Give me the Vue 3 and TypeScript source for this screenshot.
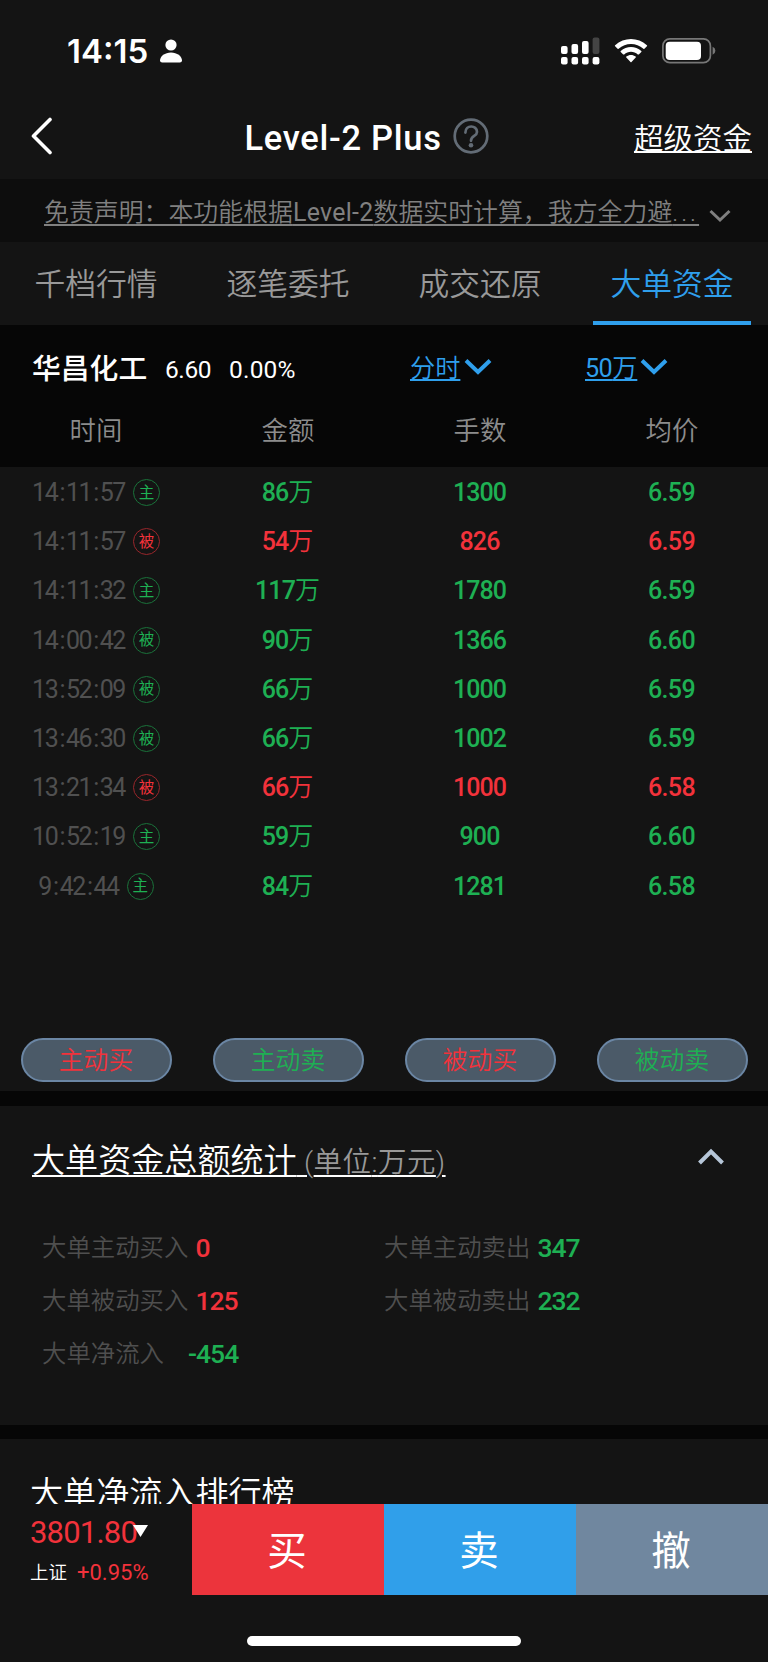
<script setup lang="ts">
type Tone = 'up' | 'down'

interface Trade {
  time: string
  kind: '主' | '被'
  amount: number
  lots: number
  price: string
  tone: Tone
}

interface Stat {
  label: string
  value: string
  tone: Tone
}

const tabs: string[] = ['千档行情', '逐笔委托', '成交还原', '大单资金']
const activeTab = 3
const columns: string[] = ['时间', '金额', '手数', '均价']

const trades: Trade[] = [
  { time: '14:11:57', kind: '主', amount: 86, lots: 1300, price: '6.59', tone: 'down' },
  { time: '14:11:57', kind: '被', amount: 54, lots: 826, price: '6.59', tone: 'up' },
  { time: '14:11:32', kind: '主', amount: 117, lots: 1780, price: '6.59', tone: 'down' },
  { time: '14:00:42', kind: '被', amount: 90, lots: 1366, price: '6.60', tone: 'down' },
  { time: '13:52:09', kind: '被', amount: 66, lots: 1000, price: '6.59', tone: 'down' },
  { time: '13:46:30', kind: '被', amount: 66, lots: 1002, price: '6.59', tone: 'down' },
  { time: '13:21:34', kind: '被', amount: 66, lots: 1000, price: '6.58', tone: 'up' },
  { time: '10:52:19', kind: '主', amount: 59, lots: 900, price: '6.60', tone: 'down' },
  { time: '9:42:44', kind: '主', amount: 84, lots: 1281, price: '6.58', tone: 'down' },
]

const filters: { label: string; tone: Tone }[] = [
  { label: '主动买', tone: 'up' },
  { label: '主动卖', tone: 'down' },
  { label: '被动买', tone: 'up' },
  { label: '被动卖', tone: 'down' },
]

const stats: Stat[] = [
  { label: '大单主动买入', value: '0', tone: 'up' },
  { label: '大单主动卖出', value: '347', tone: 'down' },
  { label: '大单被动买入', value: '125', tone: 'up' },
  { label: '大单被动卖出', value: '232', tone: 'down' },
  { label: '大单净流入', value: '-454', tone: 'down' },
]
</script>

<template>
  <div class="screen">
    <div class="status">
      <span class="clock">14:15</span>
      <svg class="person" width="24" height="24" viewBox="0 0 24 24">
        <circle cx="12" cy="6" r="5.6" />
        <path d="M1 21.5C1 17 6 13.4 12 13.4S23 17 23 21.5Q23 23.6 20.8 23.6H3.2Q1 23.6 1 21.5Z" />
      </svg>
      <svg class="signal" width="39" height="28" viewBox="0 0 39 28">
        <rect x="0" y="9" width="6.6" height="8" rx="2" />
        <rect x="10.5" y="7" width="6.6" height="10" rx="2" />
        <rect x="21" y="4" width="6.6" height="13" rx="2" />
        <rect class="dim" x="31.6" y="0.5" width="6.8" height="16.5" rx="2" />
        <rect x="0" y="20" width="6.6" height="7.6" rx="2" />
        <rect x="10.5" y="20" width="6.6" height="7.6" rx="2" />
        <rect x="21" y="20" width="6.6" height="7.6" rx="2" />
        <rect x="31.6" y="20" width="6.8" height="7.6" rx="2" />
      </svg>
      <svg class="wifi" width="34" height="26" viewBox="0 0 34 26">
        <path d="M1.1 7.3C10 -1.1 24 -1.1 32.9 7.3Q33.4 7.8 32.9 8.3L30.4 10.7Q29.9 11.1 29.4 10.7C22.4 4.3 11.6 4.3 4.6 10.7Q4.1 11.1 3.6 10.7L1.1 8.3Q.6 7.8 1.1 7.3Z" />
        <path d="M6.7 13C12.5 7.7 21.5 7.7 27.3 13Q27.8 13.5 27.3 14L24.8 16.4Q24.3 16.8 23.8 16.4C20 13 14 13 10.2 16.4Q9.7 16.8 9.2 16.4L6.7 14Q6.2 13.5 6.7 13Z" />
        <path d="M12.3 18.6C15 16.5 19 16.5 21.7 18.6Q22.2 19.1 21.7 19.6L17.5 24Q17 24.4 16.5 24L12.3 19.6Q11.8 19.1 12.3 18.6Z" />
      </svg>
      <svg class="battery" width="54" height="26" viewBox="0 0 54 26">
        <rect x="0.9" y="0.9" width="47.5" height="23.8" rx="7" fill="none" stroke="#777" stroke-width="1.7" />
        <rect x="3.7" y="3.7" width="35.3" height="18.2" rx="4" />
        <path d="M50.6 8.8V16.8Q53.4 15.6 53.4 12.8T50.6 8.8Z" fill="#777" />
      </svg>
    </div>

    <header class="nav">
      <svg class="back" width="24" height="38" viewBox="0 0 24 38">
        <path d="M20 2.5L3.5 19L20 35.5" />
      </svg>
      <div class="title">
        <h1>Level-2 Plus</h1>
        <svg class="help" width="36" height="36" viewBox="0 0 36 36">
          <circle cx="18" cy="18" r="16.3" />
          <path d="M12.4 14.6C12.4 6.4 24 6.8 24 13.9C24 18.2 18 17.8 18 22.8" />
          <circle class="dot" cx="18" cy="27.2" r="2.3" />
        </svg>
      </div>
      <a class="nav-link">超级资金</a>
    </header>

    <div class="notice">
      <span class="notice-text">免责声明：本功能根据<span class="latin">Level-2</span>数据实时计算，我方全力避<span class="dots">...</span></span>
      <svg width="22" height="14" viewBox="0 0 22 14"><path d="M1.5 2L11 11L20.5 2" /></svg>
    </div>

    <nav class="tabs">
      <div v-for="(tab, i) in tabs" :key="tab" class="tab" :class="{ active: i === activeTab }">
        <span>{{ tab }}</span>
      </div>
    </nav>

    <section class="quote">
      <div class="quote-bar">
        <strong>华昌化工</strong>
        <span class="last">6.60</span>
        <span class="change">0.00%</span>
        <div class="picker period">
          <span>分时</span>
          <svg width="28" height="18" viewBox="0 0 28 18"><path d="M2 2.5L14 14L26 2.5" /></svg>
        </div>
        <div class="picker size">
          <span><i>50</i>万</span>
          <svg width="28" height="18" viewBox="0 0 28 18"><path d="M2 2.5L14 14L26 2.5" /></svg>
        </div>
      </div>
      <div class="head">
        <span v-for="c in columns" :key="c">{{ c }}</span>
      </div>
    </section>

    <section class="trades">
      <div class="rows">
        <div v-for="(t, i) in trades" :key="i" class="row" :class="t.tone">
          <div class="when">
            <span class="time"><template v-for="(part, p) in t.time.split(':')" :key="p"><b v-if="p > 0">:</b>{{ part }}</template></span>
            <span class="badge"><em>{{ t.kind }}</em></span>
          </div>
          <div class="num">{{ t.amount }}<span class="wan">万</span></div>
          <div class="num">{{ t.lots }}</div>
          <div class="num price">{{ t.price }}</div>
        </div>
      </div>
      <div class="filters">
        <div v-for="f in filters" :key="f.label" class="filter-cell">
          <button class="filter" :class="f.tone">{{ f.label }}</button>
        </div>
      </div>
    </section>

    <section class="summary">
      <div class="summary-head">
        <h2>大单资金总额统计<small><span class="paren">&nbsp;(</span>单位<span class="paren">:</span>万元<span class="paren">)</span></small></h2>
        <svg width="28" height="18" viewBox="0 0 28 18"><path d="M2.5 15L14 3.5L25.5 15" /></svg>
      </div>
      <div class="stats">
        <div v-for="s in stats" :key="s.label" class="stat">
          <span class="stat-label">{{ s.label }}</span>
          <span class="stat-value" :class="s.tone">{{ s.value }}</span>
        </div>
      </div>
    </section>

    <section class="ranking">
      <h2>大单净流入排行榜</h2>
    </section>

    <footer class="footer">
      <div class="trade-bar">
        <div class="index">
          <div class="index-top">
            <span class="index-value">3801.80</span>
            <svg width="15" height="12" viewBox="0 0 15 12"><path d="M0 0H15L7.5 12Z" /></svg>
          </div>
          <div class="index-bottom"><span>上证</span><span class="pct">+0.95%</span></div>
        </div>
        <button class="buy">买</button>
        <button class="sell">卖</button>
        <button class="cancel">撤</button>
      </div>
      <div class="home"></div>
    </footer>
  </div>
</template>

<style>
body {
  margin: 0;
  background: #fff;
}
</style>

<style scoped>
.screen {
  width: 768px;
  height: 1662px;
  overflow: hidden;
  display: flex;
  flex-direction: column;
  background: #141414;
  color: #fff;
  font-family: Roboto, 'Noto Sans CJK SC', sans-serif;
  font-weight: 350;
}

.screen > * {
  flex: none;
}

svg {
  display: block;
  flex: none;
  fill: #fff;
}

h1,
h2 {
  margin: 0;
}

button {
  border: 0;
  padding: 0;
  font-family: inherit;
}

.up {
  color: #f2323b;
}

.down {
  color: #1eb053;
}

/* status bar */
.status {
  height: 96px;
  box-sizing: border-box;
  padding: 6px 52px 0 67px;
  display: flex;
  align-items: center;
}

.clock {
  font: 600 33px/40px Inter, sans-serif;
  width: 86px;
  white-space: nowrap;
}

.person {
  margin: -1px auto 0 6px;
}

.signal {
  margin-right: 14px;
}

.signal .dim {
  fill: #444;
}

.wifi {
  margin-right: 14px;
}

/* title bar */
.nav {
  height: 83px;
  display: flex;
  align-items: center;
  justify-content: space-between;
  padding: 0 16px 0 30px;
  box-sizing: border-box;
}

.nav > * {
  margin-top: -3px;
}

.back {
  margin-top: -1px;
  margin-bottom: 3px;
  fill: none;
  stroke: #fff;
  stroke-width: 3.6;
  stroke-linecap: round;
  stroke-linejoin: round;
}

.title {
  display: flex;
  align-items: center;
  gap: 11px;
  margin-left: 46px;
}

.title h1 {
  font-size: 34.5px;
  line-height: 44px;
  font-weight: 480;
  width: 198px;
  letter-spacing: 0.7px;
  white-space: nowrap;
  padding-top: 3px;
}

.help {
  fill: none;
  stroke: #636c76;
  stroke-width: 2.7;
  stroke-linecap: round;
}

.help .dot {
  fill: #636c76;
  stroke: none;
}

.nav-link {
  font-size: 29.5px;
  line-height: 40px;
  padding-top: 6px;
  text-decoration: underline;
  text-decoration-thickness: 2px;
  text-underline-offset: 2px;
}

/* disclaimer */
.notice {
  height: 63px;
  box-sizing: border-box;
  padding: 4px 37px 0 44px;
  display: flex;
  align-items: center;
  justify-content: space-between;
  background: #0d0d0d;
}

.notice-text {
  font-size: 24.9px;
  line-height: 36px;
  color: #808080;
  white-space: nowrap;
  text-decoration: underline;
  text-decoration-thickness: 2px;
  text-underline-offset: 3px;
}

.notice-text .latin {
  font-weight: 450;
  letter-spacing: 0.3px;
}

.notice-text .dots {
  letter-spacing: 3px;
}

.notice svg {
  margin-top: 7px;
  fill: none;
  stroke: #808080;
  stroke-width: 3;
}

/* tabs */
.tabs {
  height: 83px;
  display: flex;
}

.tab {
  width: 192px;
  display: flex;
  justify-content: center;
  color: #999;
}

.tab span {
  box-sizing: border-box;
  height: 83px;
  width: 158px;
  text-align: center;
  white-space: nowrap;
  font-size: 30.8px;
  line-height: 85px;
  border-bottom: 4px solid transparent;
}

.tab.active span {
  color: #2f9fec;
  border-color: #2f9fec;
}

/* quote strip */
.quote {
  height: 142px;
  background: #060606;
}

.quote-bar {
  height: 88px;
  display: flex;
  align-items: center;
  padding-left: 32px;
  line-height: 36px;
}

.quote-bar strong {
  width: 133px;
  font-size: 28.8px;
  line-height: 38px;
  font-weight: 500;
}

.last,
.change {
  font-size: 24.5px;
  font-weight: 450;
  width: 64px;
  padding-top: 2px;
  letter-spacing: -0.4px;
}

.change {
  width: 181px;
  letter-spacing: 0.2px;
}

.picker {
  display: flex;
  align-items: center;
  gap: 4px;
  font-size: 25.2px;
  color: #2f9fec;
}

.period {
  width: 175px;
}

.size {
  gap: 3px;
}

.picker span {
  text-decoration: underline;
  text-decoration-thickness: 2px;
  text-underline-offset: 2px;
}

.picker i {
  font-style: normal;
  font-weight: 450;
  letter-spacing: -0.6px;
}

.picker svg {
  margin-top: -5px;
  fill: none;
  stroke: #2f9fec;
  stroke-width: 4;
}

.head {
  display: flex;
  font-size: 26.4px;
  line-height: 36px;
  color: #8c8c8c;
}

.head span {
  width: 192px;
  text-align: center;
}

/* trade list */
.trades {
  height: 624px;
}

.rows {
  height: 571px;
  padding-top: 1px;
  box-sizing: border-box;
}

.row {
  display: grid;
  grid-template-columns: repeat(4, 192px);
  height: 49.2px;
  align-items: center;
}

.when {
  display: flex;
  align-items: center;
  justify-content: center;
  gap: 8px;
}

.time {
  font-size: 25px;
  line-height: 36px;
  padding-top: 1px;
  font-weight: 450;
  letter-spacing: -1.5px;
  color: #505050;
}

.time b {
  font-weight: 450;
  padding: 0 2px 0 2.2px;
}

.badge {
  width: 27px;
  height: 27px;
  box-sizing: border-box;
  border: 1.5px solid color-mix(in srgb, currentColor 60%, #141414);
  border-radius: 50%;
  display: flex;
  align-items: center;
  justify-content: center;
}

.badge em {
  font-style: normal;
  font-size: 15.5px;
  line-height: 24px;
  font-weight: 400;
}

.num {
  text-align: center;
  font-size: 25px;
  line-height: 36px;
  padding: 1px 1px 0 0;
  font-weight: 500;
  letter-spacing: -0.9px;
}

.price {
  letter-spacing: -0.6px;
}

.wan {
  font-weight: 350;
  letter-spacing: 0;
}

.filters {
  display: flex;
}

.filter-cell {
  width: 192px;
  display: flex;
  justify-content: center;
}

.filter {
  width: 151px;
  height: 44px;
  box-sizing: border-box;
  border: 2px solid #6b86a4;
  border-radius: 22px;
  background: #4b5a68;
  font-size: 24.8px;
  line-height: 42px;
  font-weight: 350;
}

/* totals */
.summary {
  height: 334px;
  box-sizing: border-box;
  border-top: 15px solid #060606;
}

.summary-head {
  display: flex;
  align-items: center;
  justify-content: space-between;
  padding: 30px 43px 0 32px;
}

.summary-head h2,
.ranking h2 {
  font-size: 33.1px;
  line-height: 48px;
  font-weight: 350;
  white-space: nowrap;
}

.summary-head h2 {
  line-height: 49px;
  text-decoration: underline;
  text-decoration-thickness: 2px;
  text-underline-offset: 3px;
}

.summary-head small {
  font-size: 28.5px;
  letter-spacing: 0.45px;
  color: #999;
}

.summary-head svg {
  margin-top: -9px;
  fill: none;
  stroke: #b6c6d8;
  stroke-width: 4;
}

.stats {
  display: grid;
  grid-template-columns: 342px 342px;
  grid-auto-rows: 53.3px;
  padding: 34px 0 0 42px;
}

.stat {
  display: flex;
  align-items: center;
  line-height: 36px;
}

.stat-label {
  width: 146.5px;
  margin-right: 7px;
  font-size: 24.4px;
  white-space: nowrap;
  color: #4f4f4f;
}

.stat-value {
  font-size: 26.5px;
  font-weight: 500;
  letter-spacing: -1px;
}

.stat:last-child .stat-label {
  width: 139px;
}

/* ranking, running under the trade bar */
.ranking {
  height: 79px;
  box-sizing: border-box;
  overflow: hidden;
  border-top: 14px solid #060606;
  padding: 31px 0 0 30px;
}

/* trade bar */
.footer {
  height: 158px;
}

.trade-bar {
  height: 91px;
  display: flex;
}

.index {
  width: 162px;
  padding-left: 30px;
}

.index-top {
  display: flex;
  height: 57px;
  align-items: center;
}

.index-value {
  width: 103px;
  font-size: 31px;
  line-height: 40px;
  font-weight: 400;
  letter-spacing: -0.8px;
  color: #f2323b;
}

.index-top svg {
  margin-top: -3px;
}

.index-bottom {
  display: flex;
  font-size: 18.5px;
  line-height: 24px;
}

.pct {
  margin-left: 10px;
  font-size: 22px;
  font-weight: 400;
  letter-spacing: 0;
  color: #f2323b;
}

.trade-bar button {
  width: 192px;
  height: 91px;
  padding: 4px 2px 0 0;
  font-size: 39.5px;
  line-height: 87px;
  font-weight: 400;
  color: #fff;
}

.trade-bar .buy {
  background: #ec343c;
}

.trade-bar .sell {
  background: #309fea;
}

.trade-bar .cancel {
  background: #70879f;
}

.home {
  width: 274px;
  height: 10px;
  margin: 41px auto 0;
  border-radius: 5px;
  background: #fff;
}
</style>
